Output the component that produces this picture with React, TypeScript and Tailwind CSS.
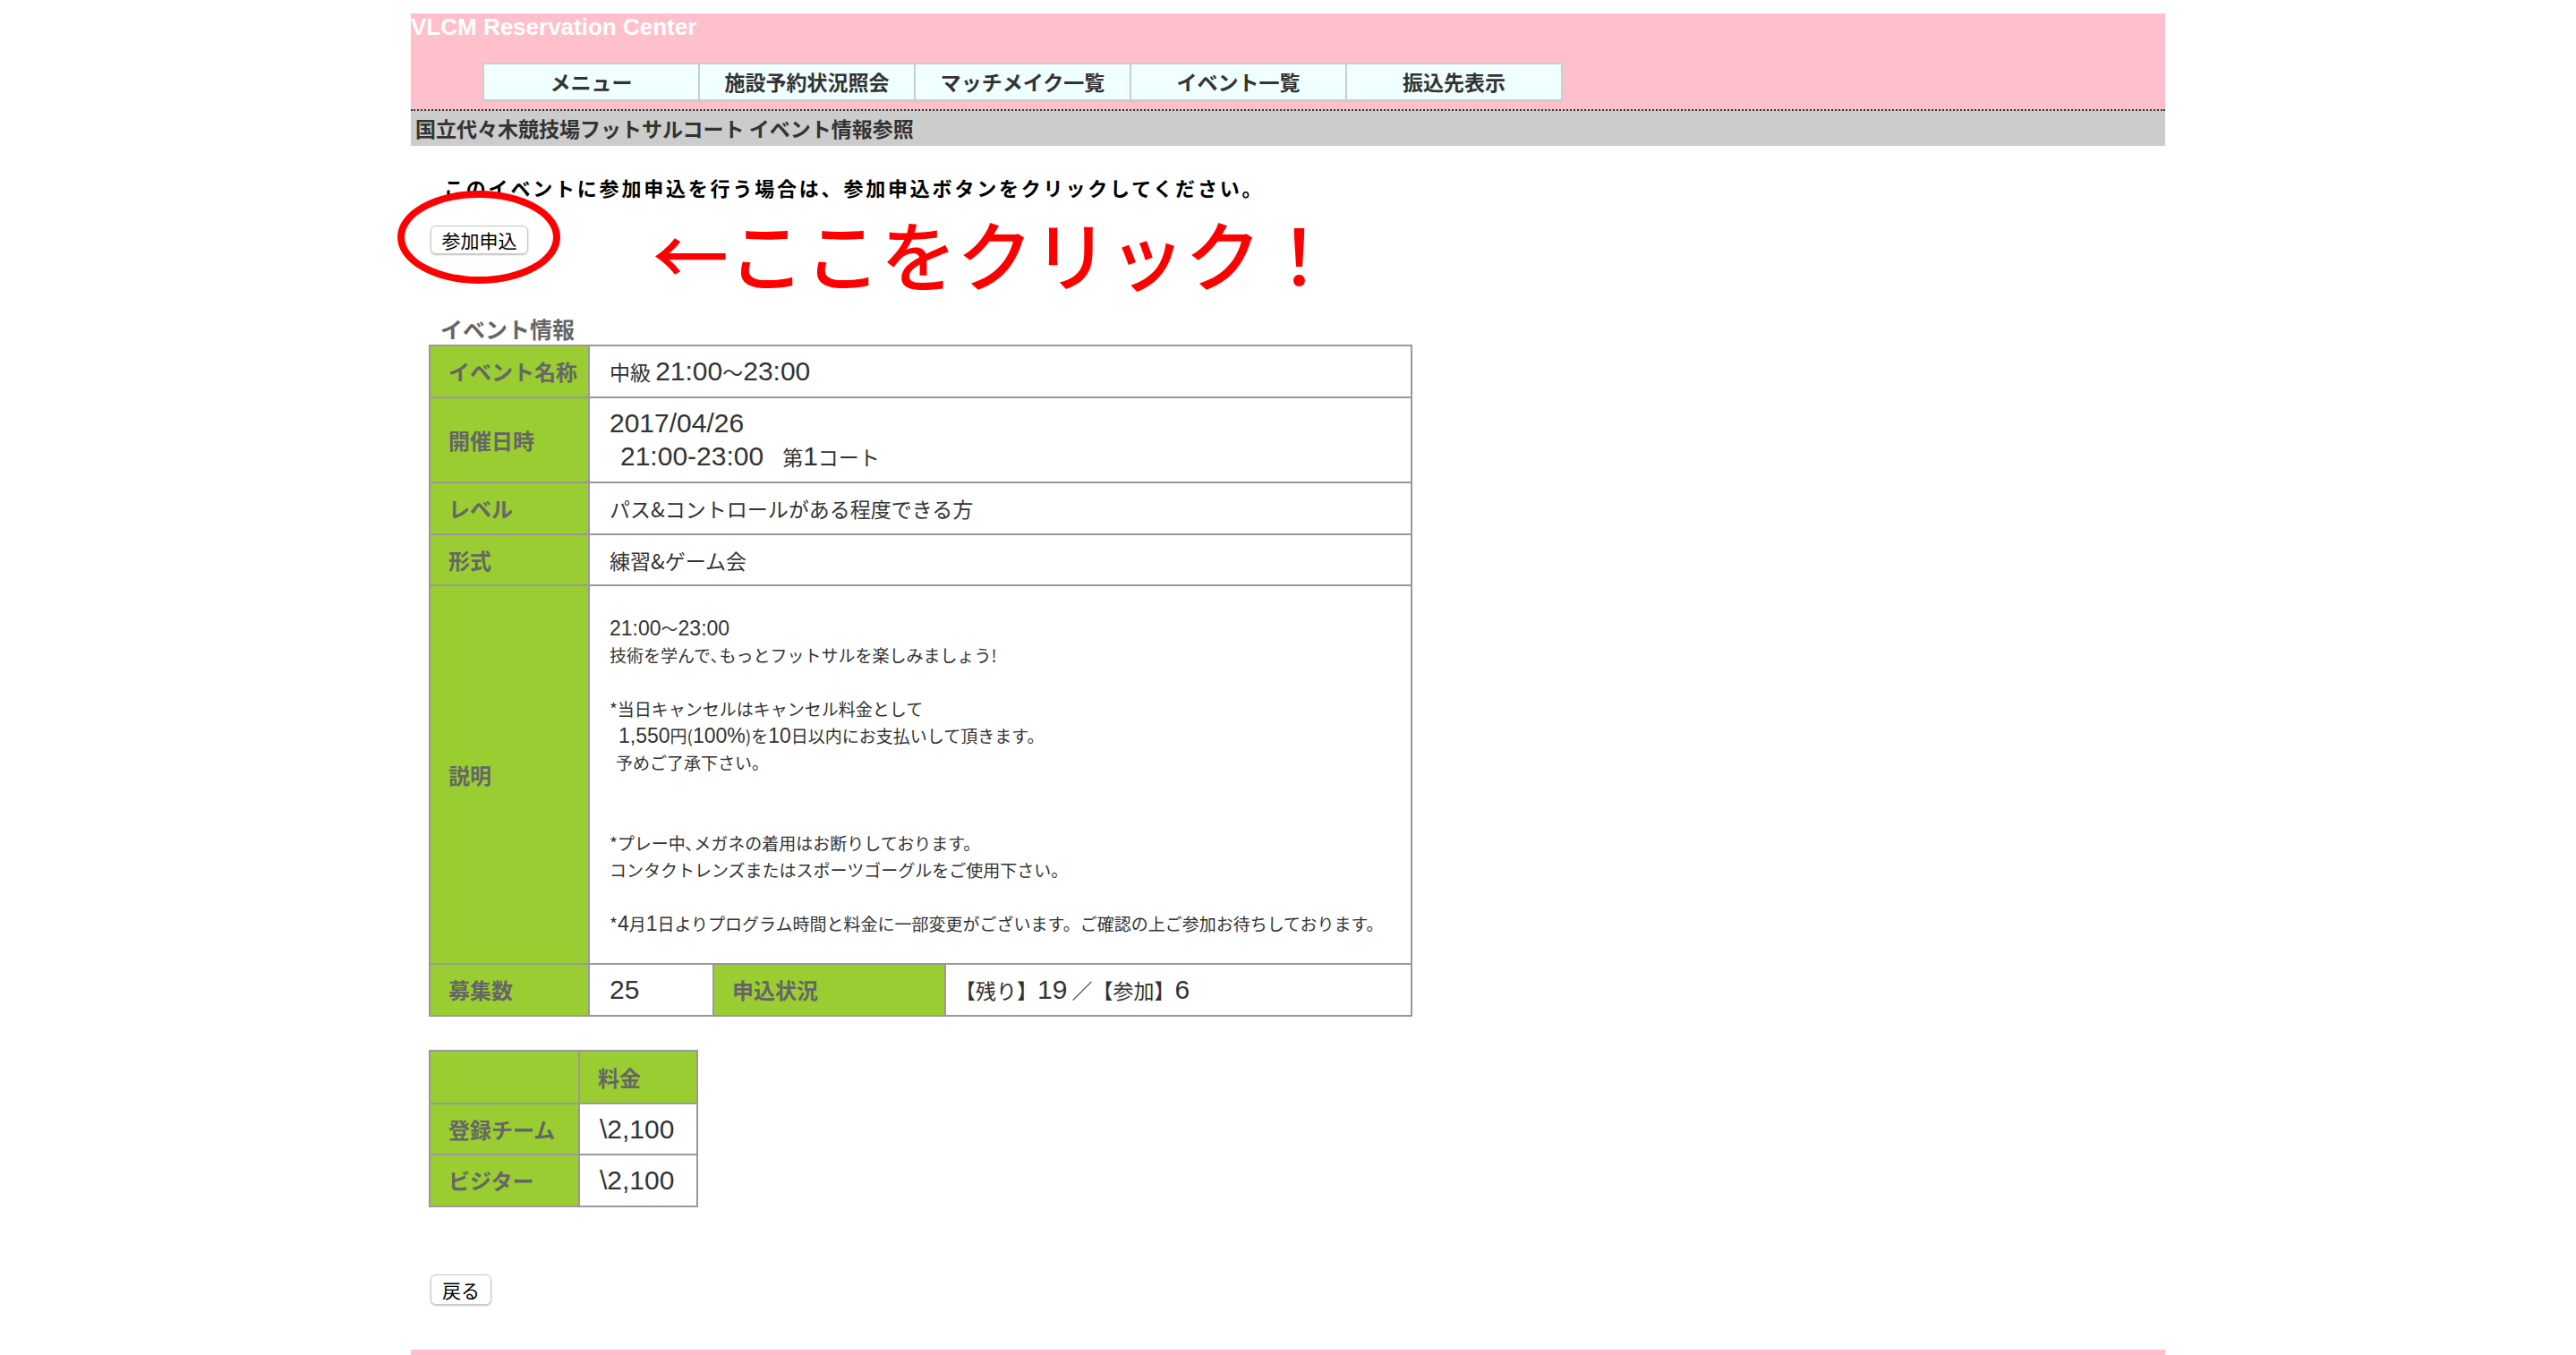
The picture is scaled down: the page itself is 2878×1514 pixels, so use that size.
import React from "react";

const tabs = ["メニュー", "施設予約状況照会", "マッチメイク一覧", "イベント一覧", "振込先表示"];

const labelCls =
  "border-2 border-[#999] bg-[#9acd32] text-[#666] font-bold text-[24px] leading-[30px] pl-[20px] text-left align-middle";
const valueCls =
  "border-2 border-[#999] bg-white text-[#333] text-[23px] leading-[30px] pl-[22px] text-left align-middle";

function N({ children }: { children: React.ReactNode }) {
  return (
    <span className="text-[30px] leading-none [font-family:'Liberation_Sans',Arial,sans-serif]">{children}</span>
  );
}

function Sn({ children }: { children: React.ReactNode }) {
  return (
    <span className="text-[23px] leading-none [font-family:'Liberation_Sans',Arial,sans-serif]">{children}</span>
  );
}

export default function App() {
  return (
    <div className="min-h-screen bg-white [font-family:'Noto_Sans_CJK_JP','Noto_Sans',sans-serif]">
      <div className="w-[1960px] mx-auto pt-[15px]">
        {/* header */}
        <div className="bg-[#ffc0cb]">
          <div className="h-[55px] text-white font-bold text-[26px] leading-[30px] [font-family:'Liberation_Sans',Arial,sans-serif]">
            VLCM Reservation Center
          </div>
          <div className="flex pl-[80px]">
            <div className="flex border-l-2 border-t-2 border-b-[3px] border-[#ccc] bg-[#f0ffff]">
              {tabs.map((t) => (
                <div
                  key={t}
                  className="w-[241px] h-[39px] border-r-2 border-[#ccc] flex items-center justify-center text-[23px] font-bold text-[#333]"
                >
                  {t}
                </div>
              ))}
            </div>
          </div>
          <div className="h-[8px]" />
        </div>
        <div className="border-t-2 border-dotted border-[#333] bg-[#ccc] h-[41px] flex items-center pl-[5px] text-[23px] font-bold text-[#333]">
          国立代々木競技場フットサルコート イベント情報参照
        </div>

        {/* body */}
        <div className="relative pt-[31px]">
          <div className="pl-[37px] leading-[30px] text-[22px] font-bold text-black tracking-[2.8px]">
            このイベントに参加申込を行う場合は、参加申込ボタンをクリックしてください。
          </div>
          <div className="mt-[28px] ml-[22px] flex">
            <button className="h-[32px] w-[109px] bg-white border border-[#c8c8c8] rounded-[6px] shadow-[0_1px_2px_rgba(0,0,0,0.25)] text-[21px] text-black leading-none flex items-center justify-center">
              参加申込
            </button>
          </div>

          {/* annotation overlays */}
          <div className="absolute left-[-15px] top-[50px] w-[182px] h-[104px] rounded-[50%] border-[8px] border-[#ff0000] pointer-events-none" />
          <div className="absolute left-[270px] top-[76px] text-[85px] leading-[85px] font-medium text-[#ff0000] whitespace-nowrap pointer-events-none">
            ←ここをクリック！
          </div>

          <div className="mt-[68px] ml-[33px] leading-[30px] text-[25px] font-bold text-[#666]">イベント情報</div>

          <table className="mt-[3px] ml-[20px] border-collapse table-fixed w-[1097px]">
            <colgroup>
              <col className="w-[178px]" />
              <col className="w-[139px]" />
              <col className="w-[259px]" />
              <col className="w-[521px]" />
            </colgroup>
            <tbody>
              <tr className="h-[58px]">
                <td className={labelCls}>イベント名称</td>
                <td className={valueCls} colSpan={3}>
                  中級 <N>21:00</N>〜<N>23:00</N>
                </td>
              </tr>
              <tr className="h-[95px]">
                <td className={labelCls}>開催日時</td>
                <td className={valueCls + " !leading-[37px]"} colSpan={3}>
                  <div>
                    <N>2017/04/26</N>
                  </div>
                  <div className="pl-[12px]">
                    <N>21:00-23:00</N>
                    <span className="ml-[21px]">
                      第<N>1</N>コート
                    </span>
                  </div>
                </td>
              </tr>
              <tr className="h-[58px]">
                <td className={labelCls}>レベル</td>
                <td className={valueCls} colSpan={3}>
                  パス&amp;コントロールがある程度できる方
                </td>
              </tr>
              <tr className="h-[57px]">
                <td className={labelCls}>形式</td>
                <td className={valueCls} colSpan={3}>
                  練習&amp;ゲーム会
                </td>
              </tr>
              <tr>
                <td className={labelCls}>説明</td>
                <td
                  className="border-2 border-[#999] bg-white text-[#333] text-[19px] leading-[30px] pl-[22px] pt-[32px] pb-[29px] align-middle"
                  colSpan={3}
                >
                  <div>
                    <Sn>21:00</Sn>〜<Sn>23:00</Sn>
                  </div>
                  <div>技術を学んで､もっとフットサルを楽しみましょう!</div>
                  <div className="h-[30px]" />
                  <div>*当日キャンセルはキャンセル料金として</div>
                  <div className="pl-[10px]">
                    <Sn>1,550</Sn>円(<Sn>100%</Sn>)を<Sn>10</Sn>日以内にお支払いして頂きます。
                  </div>
                  <div className="pl-[7px]">予めご了承下さい。</div>
                  <div className="h-[30px]" />
                  <div className="h-[30px]" />
                  <div>*プレー中､メガネの着用はお断りしております。</div>
                  <div>コンタクトレンズまたはスポーツゴーグルをご使用下さい。</div>
                  <div className="h-[30px]" />
                  <div>
                    *<Sn>4</Sn>月<Sn>1</Sn>日よりプログラム時間と料金に一部変更がございます。ご確認の上ご参加お待ちしております。
                  </div>
                </td>
              </tr>
              <tr className="h-[58px]">
                <td className={labelCls}>募集数</td>
                <td className={valueCls}>
                  <N>25</N>
                </td>
                <td className={labelCls}>申込状況</td>
                <td className="border-2 border-[#999] bg-white text-[#333] text-[23px] leading-[30px] pl-[10px] text-left align-middle">
                  【残り】<N>19</N> ／【参加】<N>6</N>
                </td>
              </tr>
            </tbody>
          </table>

          <table className="mt-[37px] ml-[20px] border-collapse table-fixed w-[299px]">
            <colgroup>
              <col className="w-[167px]" />
              <col className="w-[132px]" />
            </colgroup>
            <tbody>
              <tr className="h-[59px]">
                <td className={labelCls}></td>
                <td className={labelCls}>料金</td>
              </tr>
              <tr className="h-[57px]">
                <td className={labelCls}>登録チーム</td>
                <td className={valueCls}>
                  <N>\2,100</N>
                </td>
              </tr>
              <tr className="h-[58px]">
                <td className={labelCls}>ビジター</td>
                <td className={valueCls}>
                  <N>\2,100</N>
                </td>
              </tr>
            </tbody>
          </table>

          <div className="mt-[75px] ml-[22px] flex">
            <button className="h-[34px] w-[68px] bg-white border border-[#c8c8c8] rounded-[6px] shadow-[0_1px_2px_rgba(0,0,0,0.25)] text-[21px] text-black leading-none flex items-center justify-center">
              戻る
            </button>
          </div>
        </div>

        <div className="mt-[50px] h-[30px] bg-[#ffc0cb]" />
      </div>
    </div>
  );
}
